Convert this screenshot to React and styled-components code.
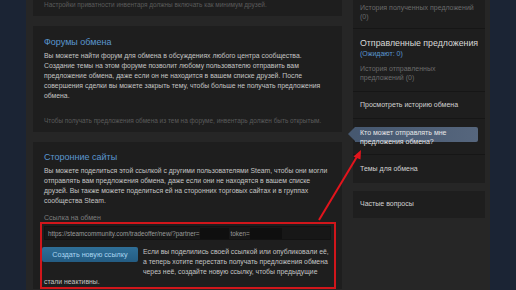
import React from 'react';
import styled, { createGlobalStyle } from 'styled-components';

const Global = createGlobalStyle`
  html, body { margin: 0; padding: 0; background: #262626; }
  body {
    width: 516px; height: 290px; overflow: hidden;
    font-family: "Liberation Sans", Arial, sans-serif;
    -webkit-font-smoothing: antialiased;
  }
`;

const Page = styled.div`
  position: relative;
  display: flex;
  width: 516px;
  height: 290px;
  overflow: hidden;
  background: #262626;
`;

const Strip = styled.div`
  flex: 0 0 ${(p) => p.$w}px;
  background: #1b2434;
`;

const Main = styled.div`
  flex: 1;
  display: flex;
  align-items: flex-start;
  gap: 11px;
  padding: 0 5px 0 7px;
`;

const LeftCol = styled.div`
  flex: 0 0 309px;
  display: flex;
  flex-direction: column;
  gap: 10px;
`;

const Panel = styled.section`
  background: #1e1e1e;
  padding: ${(p) => p.$pad || '0 11px'};
`;

const Heading = styled.h2`
  margin: 0;
  font-size: 9px;
  line-height: 11px;
  font-weight: normal;
  color: #5a97d0;
`;

const Body = styled.p`
  margin: 3px 0 0;
  font-size: 6.85px;
  line-height: 10px;
  color: #c4c4c4;
`;

const Note = styled.p`
  margin: ${(p) => p.$m || '0'};
  font-size: 6.45px;
  line-height: 9px;
  color: #5b5b5b;
`;

const Label = styled.div`
  margin-top: 7px;
  font-size: 7px;
  line-height: 9px;
  color: #7d7d7d;
`;

const RedBox = styled.div`
  margin: 0 -5px 0 -4px;
  padding: 2px 3px 0 2px;
  border: 2px solid #d0161b;
`;

const LinkField = styled.div`
  height: 14px;
  box-sizing: border-box;
  display: flex;
  align-items: center;
  padding: 0 3px;
  background: #171717;
  border: 1px solid #121212;
  font-size: 6.35px;
  color: #9a9a9a;
  white-space: nowrap;
  overflow: hidden;
`;

const Redacted = styled.span`
  display: inline-block;
  width: ${(p) => p.$w}px;
  height: 11px;
  background: #0f0f0f;
  margin-right: 2px;
`;

const ResetRow = styled.div`
  margin-top: 7px;
  font-size: 6.85px;
  line-height: 10px;
  color: #c4c4c4;
`;

const BlueButton = styled.button`
  float: left;
  width: 96px;
  height: 15px;
  margin: 0 5px 10px -2px;
  padding: 0;
  border: none;
  border-radius: 2px;
  background: linear-gradient(to bottom, #2f6f98 0%, #245c82 100%);
  color: #a9d5f1;
  font-family: inherit;
  font-size: 7.2px;
  line-height: 15px;
  text-align: center;
`;

const RightCol = styled.div`
  flex: 0 0 130px;
  display: flex;
  flex-direction: column;
  gap: 8px;
`;

const SidePanel = styled.nav`
  background: #1e1e1e;
`;

const SideItem = styled.div`
  padding: ${(p) => p.$pad || '8px 7px'};
  border-bottom: 1px solid #161616;
  font-size: 7px;
  line-height: ${(p) => p.$lh || 10}px;
  color: ${(p) => p.$c || '#d2d2d2'};
  &:last-child { border-bottom: none; }
`;

const SideTitle = styled.div`
  font-size: 8.8px;
  line-height: 11px;
  color: #d8d8d8;
  white-space: nowrap;
`;

const Pending = styled.div`
  font-size: 7px;
  line-height: 9px;
  color: #5a97d0;
`;

const SubHistory = styled.div`
  margin-top: 6px;
  font-size: 7px;
  line-height: 9px;
  color: #6a6a6a;
`;

const ActiveTab = styled.div`
  position: relative;
  height: 15px;
  margin-left: -5px;
  padding: 1.5px 5px 0;
  box-sizing: border-box;
  background: linear-gradient(to right, #465870 0%, #56667d 100%);
  border-radius: 0 2px 2px 0;
  color: #e6e6e6;
  line-height: 9px;
  &::before {
    content: '';
    position: absolute;
    left: -7px;
    top: 0;
    border-top: 7.5px solid transparent;
    border-bottom: 7.5px solid transparent;
    border-right: 7px solid #465870;
  }
`;

const Overlay = styled.svg`
  position: absolute;
  left: 0;
  top: 0;
  pointer-events: none;
`;

export default function App() {
  return (
    <Page>
      <Global />
      <Strip $w={26} />
      <Main>
        <LeftCol>
          <Panel $pad="0 11px 7px">
            <Note>Настройки приватности инвентаря должны включать как минимум друзей.</Note>
          </Panel>
          <Panel $pad="11px 11px 7.5px">
            <Heading>Форумы обмена</Heading>
            <Body>
              Вы можете найти форум для обмена в обсуждениях любого центра сообщества.
              Создание темы на этом форуме позволит любому пользователю отправить вам
              предложение обмена, даже если он не находится в вашем списке друзей. После
              совершения сделки вы можете закрыть тему, чтобы больше не получать предложения
              обмена.
            </Body>
            <Note $m="14.5px 0 0">
              Чтобы получать предложения обмена из тем на форуме, инвентарь должен быть открытым.
            </Note>
          </Panel>
          <Panel $pad="10px 11px 0">
            <Heading>Сторонние сайты</Heading>
            <Body>
              Вы можете поделиться этой ссылкой с другими пользователями Steam, чтобы они могли
              отправлять вам предложения обмена, даже если они не находятся в вашем списке
              друзей. Вы также можете поделиться ей на сторонних торговых сайтах и в группах
              сообщества Steam.
            </Body>
            <Label>Ссылка на обмен</Label>
            <RedBox>
              <LinkField>
                https://steamcommunity.com/tradeoffer/new/?partner=
                <Redacted $w={29} />
                token=
                <Redacted $w={32} />
              </LinkField>
              <ResetRow>
                <BlueButton>Создать новую ссылку</BlueButton>
                <span>
                  Если вы поделились своей ссылкой или опубликовали её, а теперь хотите перестать
                  получать предложения обмена через неё, создайте новую ссылку, чтобы предыдущие
                  стали неактивны.
                </span>
              </ResetRow>
            </RedBox>
          </Panel>
        </LeftCol>
        <RightCol>
          <SidePanel>
            <SideItem $pad="2.5px 7px 7.5px" $lh={9} $c="#6a6a6a">
              История полученных предложений (0)
            </SideItem>
            <SideItem $pad="9px 7px 8.5px">
              <SideTitle>Отправленные предложения</SideTitle>
              <Pending>(Ожидают: 0)</Pending>
              <SubHistory>История отправленных предложений (0)</SubHistory>
            </SideItem>
            <SideItem>Просмотреть историю обмена</SideItem>
            <SideItem $pad="8px 7px 12px" $lh={9}>
              <ActiveTab>Кто может отправлять мне предложения обмена?</ActiveTab>
            </SideItem>
            <SideItem $pad="9px 7px">Темы для обмена</SideItem>
          </SidePanel>
          <SidePanel>
            <SideItem $pad="8.5px 7px">Частые вопросы</SideItem>
          </SidePanel>
        </RightCol>
      </Main>
      <Strip $w={28} />
      <Overlay width="516" height="290" viewBox="0 0 516 290">
        <line x1="319" y1="220" x2="358" y2="155" stroke="#e3141c" strokeWidth="2" />
        <polygon points="361,150 353.5,156.5 360.5,159.5" fill="#e3141c" />
      </Overlay>
    </Page>
  );
}
